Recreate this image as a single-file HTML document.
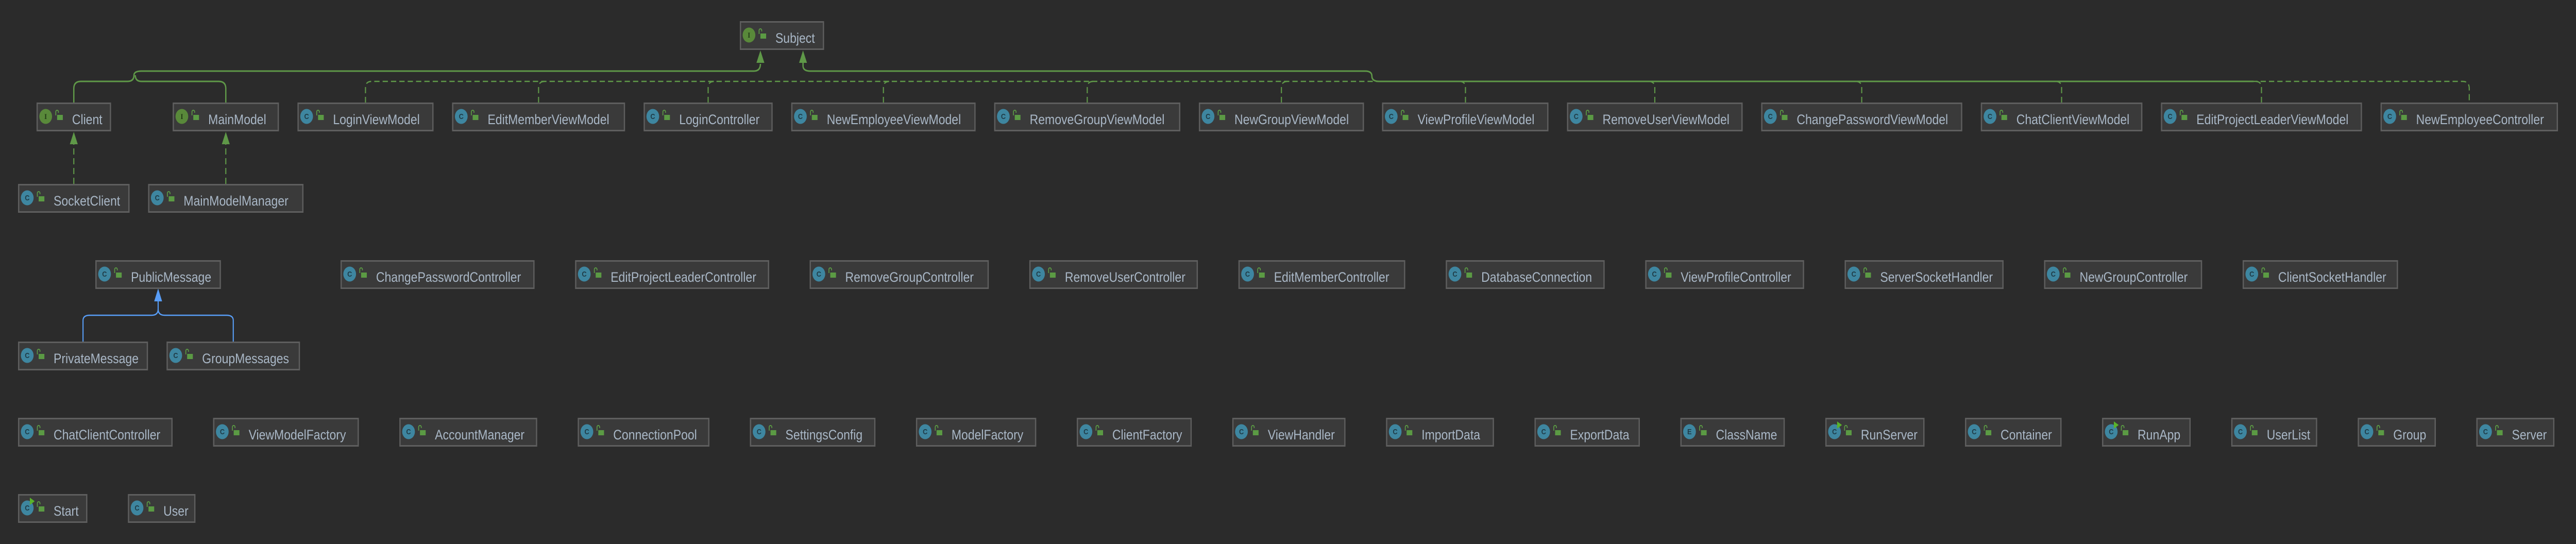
<!DOCTYPE html>
<html><head><meta charset="utf-8"><style>
html,body{margin:0;padding:0;background:#2b2b2b;width:100%;height:100%;overflow:hidden}
svg.main{display:block;width:100vw;height:100vh}
.bx rect{fill:#3a3a3a;stroke:#5e5e5e;stroke-width:3}
.bx circle{fill:#3e86a0}
.bx circle.i{fill:#59893a}
.bx text{font-family:"Liberation Sans",sans-serif;font-size:27px;fill:#a9b7c6}
.bx text.l{font-size:15px;font-weight:bold;fill:#1f3b46;text-anchor:middle}
.bx text.l.i{fill:#223a16;font-family:"Liberation Serif",serif}
</style></head><body>
<svg class="main" viewBox="0 0 5864 1056" preserveAspectRatio="none" fill="none">
<defs>
<g id="lk"><rect x="47" y="24" width="13" height="10" fill="#5b9a44" stroke="none"/><path d="M44 25 V18 A3 3 0 0 1 50 18 V20" stroke="#5b9a44" stroke-width="2" fill="none"/></g>
<path id="run" d="M27 7 L38 14 L27 21Z" fill="#59b32a"/>
</defs>
<rect width="5864" height="1056" fill="#2b2b2b"/>
<g stroke="#5f9848" stroke-width="3">
<path d="M168 200 V172 Q168 158 184 158 H290 Q305 158 305 146 Q305 138 322 138 H1716 Q1731 138 1731 124"/>
<path d="M514 200 V172 Q514 158 498 158 H322 Q308 158 308 146"/>
<path d="M1828 122 V128 Q1828 138 1845 138 H3108 Q3123 138 3123 148 Q3123 158 3140 158 H5130"/>
</g>
<g fill="#5f9848">
<path d="M1731 98 L1722 122 L1740 122Z"/>
<path d="M1828 98 L1819 122 L1837 122Z"/>
<path d="M168 256 L159 280 L177 280Z"/>
<path d="M514 256 L505 280 L523 280Z"/>
</g>
<g stroke="#5f9848" stroke-width="2.5" stroke-dasharray="12 7">
<path d="M168 357 V280"/><path d="M514 357 V280"/>
<path d="M832 200 V170 Q832 158 846 158 H5606 Q5621 158 5621 172 V200"/>
<path d="M1226 200 V170 Q1226 158 1240 158"/>
<path d="M1612 200 V170 Q1612 158 1626 158"/>
<path d="M2011 200 V170 Q2011 158 2025 158"/>
<path d="M2475 200 V170 Q2475 158 2489 158"/>
<path d="M2917 200 V170 Q2917 158 2931 158"/>
<path d="M3336 200 V170 Q3336 158 3322 158"/>
<path d="M3767 200 V170 Q3767 158 3753 158"/>
<path d="M4238 200 V170 Q4238 158 4224 158"/>
<path d="M4693 200 V170 Q4693 158 4679 158"/>
<path d="M5148 200 V170 Q5148 158 5134 158"/>
</g>
<g stroke="#589df6" stroke-width="2.5">
<path d="M189 663 V622 Q189 612 204 612 H345 Q360 612 360 600 V585"/>
<path d="M531 663 V622 Q531 612 516 612 H375 Q360 612 360 600"/>
</g>
<path d="M360 560 L351 585 L369 585Z" fill="#589df6"/>

<svg class="bx" x="1684" y="41" width="192" height="56"><rect x="1.5" y="1.5" width="189" height="53"/><circle class="i" cx="21" cy="27" r="14.5"/><text class="l i" x="21" y="32">I</text><use href="#lk"/><text x="81" y="42">Subject</text></svg>

<svg class="bx" x="83" y="199" width="170" height="56"><rect x="1.5" y="1.5" width="167" height="53"/><circle class="i" cx="21" cy="27" r="14.5"/><text class="l i" x="21" y="32">I</text><use href="#lk"/><text x="81" y="42">Client</text></svg>
<svg class="bx" x="393" y="199" width="242" height="56"><rect x="1.5" y="1.5" width="239" height="53"/><circle class="i" cx="21" cy="27" r="14.5"/><text class="l i" x="21" y="32">I</text><use href="#lk"/><text x="81" y="42">MainModel</text></svg>
<svg class="bx" x="677" y="199" width="310" height="56"><rect x="1.5" y="1.5" width="307" height="53"/><circle cx="21" cy="27" r="14.5"/><text class="l" x="21" y="32">C</text><use href="#lk"/><text x="81" y="42">LoginViewModel</text></svg>
<svg class="bx" x="1029" y="199" width="394" height="56"><rect x="1.5" y="1.5" width="391" height="53"/><circle cx="21" cy="27" r="14.5"/><text class="l" x="21" y="32">C</text><use href="#lk"/><text x="81" y="42">EditMemberViewModel</text></svg>
<svg class="bx" x="1465" y="199" width="294" height="56"><rect x="1.5" y="1.5" width="291" height="53"/><circle cx="21" cy="27" r="14.5"/><text class="l" x="21" y="32">C</text><use href="#lk"/><text x="81" y="42">LoginController</text></svg>
<svg class="bx" x="1801" y="199" width="420" height="56"><rect x="1.5" y="1.5" width="417" height="53"/><circle cx="21" cy="27" r="14.5"/><text class="l" x="21" y="32">C</text><use href="#lk"/><text x="81" y="42">NewEmployeeViewModel</text></svg>
<svg class="bx" x="2263" y="199" width="424" height="56"><rect x="1.5" y="1.5" width="421" height="53"/><circle cx="21" cy="27" r="14.5"/><text class="l" x="21" y="32">C</text><use href="#lk"/><text x="81" y="42">RemoveGroupViewModel</text></svg>
<svg class="bx" x="2729" y="199" width="376" height="56"><rect x="1.5" y="1.5" width="373" height="53"/><circle cx="21" cy="27" r="14.5"/><text class="l" x="21" y="32">C</text><use href="#lk"/><text x="81" y="42">NewGroupViewModel</text></svg>
<svg class="bx" x="3146" y="199" width="379" height="56"><rect x="1.5" y="1.5" width="376" height="53"/><circle cx="21" cy="27" r="14.5"/><text class="l" x="21" y="32">C</text><use href="#lk"/><text x="81" y="42">ViewProfileViewModel</text></svg>
<svg class="bx" x="3567" y="199" width="400" height="56"><rect x="1.5" y="1.5" width="397" height="53"/><circle cx="21" cy="27" r="14.5"/><text class="l" x="21" y="32">C</text><use href="#lk"/><text x="81" y="42">RemoveUserViewModel</text></svg>
<svg class="bx" x="4009" y="199" width="458" height="56"><rect x="1.5" y="1.5" width="455" height="53"/><circle cx="21" cy="27" r="14.5"/><text class="l" x="21" y="32">C</text><use href="#lk"/><text x="81" y="42">ChangePasswordViewModel</text></svg>
<svg class="bx" x="4509" y="199" width="368" height="56"><rect x="1.5" y="1.5" width="365" height="53"/><circle cx="21" cy="27" r="14.5"/><text class="l" x="21" y="32">C</text><use href="#lk"/><text x="81" y="42">ChatClientViewModel</text></svg>
<svg class="bx" x="4919" y="199" width="458" height="56"><rect x="1.5" y="1.5" width="455" height="53"/><circle cx="21" cy="27" r="14.5"/><text class="l" x="21" y="32">C</text><use href="#lk"/><text x="81" y="42">EditProjectLeaderViewModel</text></svg>
<svg class="bx" x="5419" y="199" width="404" height="56"><rect x="1.5" y="1.5" width="401" height="53"/><circle cx="21" cy="27" r="14.5"/><text class="l" x="21" y="32">C</text><use href="#lk"/><text x="81" y="42">NewEmployeeController</text></svg>

<svg class="bx" x="41" y="357" width="254" height="56"><rect x="1.5" y="1.5" width="251" height="53"/><circle cx="21" cy="27" r="14.5"/><text class="l" x="21" y="32">C</text><use href="#lk"/><text x="81" y="42">SocketClient</text></svg>
<svg class="bx" x="337" y="357" width="354" height="56"><rect x="1.5" y="1.5" width="351" height="53"/><circle cx="21" cy="27" r="14.5"/><text class="l" x="21" y="32">C</text><use href="#lk"/><text x="81" y="42">MainModelManager</text></svg>

<svg class="bx" x="217" y="505" width="286" height="56"><rect x="1.5" y="1.5" width="283" height="53"/><circle cx="21" cy="27" r="14.5"/><text class="l" x="21" y="32">C</text><use href="#lk"/><text x="81" y="42">PublicMessage</text></svg>
<svg class="bx" x="775" y="505" width="442" height="56"><rect x="1.5" y="1.5" width="439" height="53"/><circle cx="21" cy="27" r="14.5"/><text class="l" x="21" y="32">C</text><use href="#lk"/><text x="81" y="42">ChangePasswordController</text></svg>
<svg class="bx" x="1309" y="505" width="442" height="56"><rect x="1.5" y="1.5" width="439" height="53"/><circle cx="21" cy="27" r="14.5"/><text class="l" x="21" y="32">C</text><use href="#lk"/><text x="81" y="42">EditProjectLeaderController</text></svg>
<svg class="bx" x="1843" y="505" width="408" height="56"><rect x="1.5" y="1.5" width="405" height="53"/><circle cx="21" cy="27" r="14.5"/><text class="l" x="21" y="32">C</text><use href="#lk"/><text x="81" y="42">RemoveGroupController</text></svg>
<svg class="bx" x="2343" y="505" width="384" height="56"><rect x="1.5" y="1.5" width="381" height="53"/><circle cx="21" cy="27" r="14.5"/><text class="l" x="21" y="32">C</text><use href="#lk"/><text x="81" y="42">RemoveUserController</text></svg>
<svg class="bx" x="2819" y="505" width="380" height="56"><rect x="1.5" y="1.5" width="377" height="53"/><circle cx="21" cy="27" r="14.5"/><text class="l" x="21" y="32">C</text><use href="#lk"/><text x="81" y="42">EditMemberController</text></svg>
<svg class="bx" x="3291" y="505" width="362" height="56"><rect x="1.5" y="1.5" width="359" height="53"/><circle cx="21" cy="27" r="14.5"/><text class="l" x="21" y="32">C</text><use href="#lk"/><text x="81" y="42">DatabaseConnection</text></svg>
<svg class="bx" x="3745" y="505" width="362" height="56"><rect x="1.5" y="1.5" width="359" height="53"/><circle cx="21" cy="27" r="14.5"/><text class="l" x="21" y="32">C</text><use href="#lk"/><text x="81" y="42">ViewProfileController</text></svg>
<svg class="bx" x="4199" y="505" width="362" height="56"><rect x="1.5" y="1.5" width="359" height="53"/><circle cx="21" cy="27" r="14.5"/><text class="l" x="21" y="32">C</text><use href="#lk"/><text x="81" y="42">ServerSocketHandler</text></svg>
<svg class="bx" x="4653" y="505" width="360" height="56"><rect x="1.5" y="1.5" width="357" height="53"/><circle cx="21" cy="27" r="14.5"/><text class="l" x="21" y="32">C</text><use href="#lk"/><text x="81" y="42">NewGroupController</text></svg>
<svg class="bx" x="5105" y="505" width="354" height="56"><rect x="1.5" y="1.5" width="351" height="53"/><circle cx="21" cy="27" r="14.5"/><text class="l" x="21" y="32">C</text><use href="#lk"/><text x="81" y="42">ClientSocketHandler</text></svg>

<svg class="bx" x="41" y="663" width="296" height="56"><rect x="1.5" y="1.5" width="293" height="53"/><circle cx="21" cy="27" r="14.5"/><text class="l" x="21" y="32">C</text><use href="#lk"/><text x="81" y="42">PrivateMessage</text></svg>
<svg class="bx" x="379" y="663" width="304" height="56"><rect x="1.5" y="1.5" width="301" height="53"/><circle cx="21" cy="27" r="14.5"/><text class="l" x="21" y="32">C</text><use href="#lk"/><text x="81" y="42">GroupMessages</text></svg>

<svg class="bx" x="41" y="811" width="352" height="56"><rect x="1.5" y="1.5" width="349" height="53"/><circle cx="21" cy="27" r="14.5"/><text class="l" x="21" y="32">C</text><use href="#lk"/><text x="81" y="42">ChatClientController</text></svg>
<svg class="bx" x="485" y="811" width="332" height="56"><rect x="1.5" y="1.5" width="329" height="53"/><circle cx="21" cy="27" r="14.5"/><text class="l" x="21" y="32">C</text><use href="#lk"/><text x="81" y="42">ViewModelFactory</text></svg>
<svg class="bx" x="909" y="811" width="314" height="56"><rect x="1.5" y="1.5" width="311" height="53"/><circle cx="21" cy="27" r="14.5"/><text class="l" x="21" y="32">C</text><use href="#lk"/><text x="81" y="42">AccountManager</text></svg>
<svg class="bx" x="1315" y="811" width="300" height="56"><rect x="1.5" y="1.5" width="297" height="53"/><circle cx="21" cy="27" r="14.5"/><text class="l" x="21" y="32">C</text><use href="#lk"/><text x="81" y="42">ConnectionPool</text></svg>
<svg class="bx" x="1707" y="811" width="286" height="56"><rect x="1.5" y="1.5" width="283" height="53"/><circle cx="21" cy="27" r="14.5"/><text class="l" x="21" y="32">C</text><use href="#lk"/><text x="81" y="42">SettingsConfig</text></svg>
<svg class="bx" x="2085" y="811" width="274" height="56"><rect x="1.5" y="1.5" width="271" height="53"/><circle cx="21" cy="27" r="14.5"/><text class="l" x="21" y="32">C</text><use href="#lk"/><text x="81" y="42">ModelFactory</text></svg>
<svg class="bx" x="2451" y="811" width="262" height="56"><rect x="1.5" y="1.5" width="259" height="53"/><circle cx="21" cy="27" r="14.5"/><text class="l" x="21" y="32">C</text><use href="#lk"/><text x="81" y="42">ClientFactory</text></svg>
<svg class="bx" x="2805" y="811" width="258" height="56"><rect x="1.5" y="1.5" width="255" height="53"/><circle cx="21" cy="27" r="14.5"/><text class="l" x="21" y="32">C</text><use href="#lk"/><text x="81" y="42">ViewHandler</text></svg>
<svg class="bx" x="3155" y="811" width="246" height="56"><rect x="1.5" y="1.5" width="243" height="53"/><circle cx="21" cy="27" r="14.5"/><text class="l" x="21" y="32">C</text><use href="#lk"/><text x="81" y="42">ImportData</text></svg>
<svg class="bx" x="3493" y="811" width="240" height="56"><rect x="1.5" y="1.5" width="237" height="53"/><circle cx="21" cy="27" r="14.5"/><text class="l" x="21" y="32">C</text><use href="#lk"/><text x="81" y="42">ExportData</text></svg>
<svg class="bx" x="3825" y="811" width="238" height="56"><rect x="1.5" y="1.5" width="235" height="53"/><circle cx="21" cy="27" r="14.5"/><text class="l" x="21" y="32">E</text><use href="#lk"/><text x="81" y="42">ClassName</text></svg>
<svg class="bx" x="4155" y="811" width="226" height="56"><rect x="1.5" y="1.5" width="223" height="53"/><circle cx="21" cy="27" r="14.5"/><text class="l" x="21" y="32">C</text><use href="#run"/><use href="#lk"/><text x="81" y="42">RunServer</text></svg>
<svg class="bx" x="4473" y="811" width="220" height="56"><rect x="1.5" y="1.5" width="217" height="53"/><circle cx="21" cy="27" r="14.5"/><text class="l" x="21" y="32">C</text><use href="#lk"/><text x="81" y="42">Container</text></svg>
<svg class="bx" x="4785" y="811" width="202" height="56"><rect x="1.5" y="1.5" width="199" height="53"/><circle cx="21" cy="27" r="14.5"/><text class="l" x="21" y="32">C</text><use href="#run"/><use href="#lk"/><text x="81" y="42">RunApp</text></svg>
<svg class="bx" x="5079" y="811" width="196" height="56"><rect x="1.5" y="1.5" width="193" height="53"/><circle cx="21" cy="27" r="14.5"/><text class="l" x="21" y="32">C</text><use href="#lk"/><text x="81" y="42">UserList</text></svg>
<svg class="bx" x="5367" y="811" width="178" height="56"><rect x="1.5" y="1.5" width="175" height="53"/><circle cx="21" cy="27" r="14.5"/><text class="l" x="21" y="32">C</text><use href="#lk"/><text x="81" y="42">Group</text></svg>
<svg class="bx" x="5637" y="811" width="178" height="56"><rect x="1.5" y="1.5" width="175" height="53"/><circle cx="21" cy="27" r="14.5"/><text class="l" x="21" y="32">C</text><use href="#lk"/><text x="81" y="42">Server</text></svg>

<svg class="bx" x="41" y="959" width="158" height="56"><rect x="1.5" y="1.5" width="155" height="53"/><circle cx="21" cy="27" r="14.5"/><text class="l" x="21" y="32">C</text><use href="#run"/><use href="#lk"/><text x="81" y="42">Start</text></svg>
<svg class="bx" x="291" y="959" width="154" height="56"><rect x="1.5" y="1.5" width="151" height="53"/><circle cx="21" cy="27" r="14.5"/><text class="l" x="21" y="32">C</text><use href="#lk"/><text x="81" y="42">User</text></svg>
</svg>
</body></html>
